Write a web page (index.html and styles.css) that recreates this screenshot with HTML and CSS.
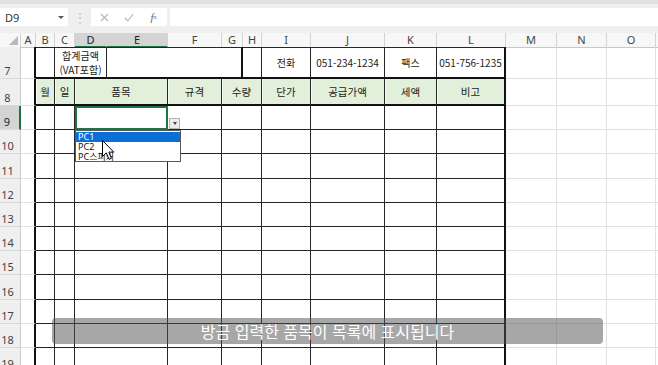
FILE: index.html
```html
<!DOCTYPE html>
<html lang="ko">
<head>
<meta charset="utf-8">
<title>Sheet</title>
<link rel="stylesheet" href="styles.css">
</head>
<body>
<div class="app">
  <div class="fbar">
    <div class="namebox"><span>D9</span><span class="caret"></span></div>
    <div class="grip">⋮</div>
    <div class="fbtns">
      <span class="ico"><svg width="9" height="9" viewBox="0 0 9 9"><path d="M1 1L8 8M8 1L1 8" stroke="#b4b4b4" stroke-width="1.1" fill="none"/></svg></span>
      <span class="ico"><svg width="10" height="9" viewBox="0 0 10 9"><path d="M1 5L3.8 8L9 1" stroke="#b4b4b4" stroke-width="1.1" fill="none"/></svg></span>
      <span class="ico fx">f<sub>x</sub></span>
    </div>
    <div class="finput"></div>
  </div>

  <div class="sheet">
    <div class="row hdr">
      <div class="corner"><span class="tri"></span></div>
      <div class="ch">A</div><div class="ch">B</div><div class="ch">C</div>
      <div class="ch on">D</div><div class="ch on">E</div>
      <div class="ch">F</div><div class="ch">G</div><div class="ch">H</div>
      <div class="ch">I</div><div class="ch">J</div><div class="ch">K</div>
      <div class="ch">L</div><div class="ch">M</div><div class="ch">N</div>
      <div class="ch">O</div><div class="ch"></div>
    </div>

    <div class="row r7">
      <div class="c rh">7</div>
      <div class="c ae"></div>
      <div class="c t top"></div>
      <div class="c t top s2 two">합계금액<br>(VAT포함)</div>
      <div class="c t top s3 thick"></div>
      <div class="c t top"></div>
      <div class="c t top">전화</div>
      <div class="c t top">051-234-1234</div>
      <div class="c t top">팩스</div>
      <div class="c t top le">051-756-1235</div>
      <div class="c"></div><div class="c"></div><div class="c"></div><div class="c"></div>
    </div>

    <div class="row r8">
      <div class="c rh">8</div>
      <div class="c ae"></div>
      <div class="c t">월</div>
      <div class="c t">일</div>
      <div class="c t s2">품목</div>
      <div class="c t">규격</div>
      <div class="c t s2">수량</div>
      <div class="c t">단가</div>
      <div class="c t">공급가액</div>
      <div class="c t">세액</div>
      <div class="c t le">비고</div>
      <div class="c"></div><div class="c"></div><div class="c"></div><div class="c"></div>
    </div>

    <div class="row rb">
      <div class="c rh on">9</div>
      <div class="c ae"></div><div class="c t"></div><div class="c t"></div>
      <div class="c t s2 sel"></div><div class="c t"></div><div class="c t s2"></div>
      <div class="c t"></div><div class="c t"></div><div class="c t"></div><div class="c t le"></div>
      <div class="c"></div><div class="c"></div><div class="c"></div><div class="c"></div>
    </div>
    <div class="row rb">
      <div class="c rh">10</div>
      <div class="c ae"></div><div class="c t"></div><div class="c t"></div>
      <div class="c t s2"></div><div class="c t"></div><div class="c t s2"></div>
      <div class="c t"></div><div class="c t"></div><div class="c t"></div><div class="c t le"></div>
      <div class="c"></div><div class="c"></div><div class="c"></div><div class="c"></div>
    </div>
    <div class="row rb">
      <div class="c rh">11</div>
      <div class="c ae"></div><div class="c t"></div><div class="c t"></div>
      <div class="c t s2"></div><div class="c t"></div><div class="c t s2"></div>
      <div class="c t"></div><div class="c t"></div><div class="c t"></div><div class="c t le"></div>
      <div class="c"></div><div class="c"></div><div class="c"></div><div class="c"></div>
    </div>
    <div class="row rb">
      <div class="c rh">12</div>
      <div class="c ae"></div><div class="c t"></div><div class="c t"></div>
      <div class="c t s2"></div><div class="c t"></div><div class="c t s2"></div>
      <div class="c t"></div><div class="c t"></div><div class="c t"></div><div class="c t le"></div>
      <div class="c"></div><div class="c"></div><div class="c"></div><div class="c"></div>
    </div>
    <div class="row rb">
      <div class="c rh">13</div>
      <div class="c ae"></div><div class="c t"></div><div class="c t"></div>
      <div class="c t s2"></div><div class="c t"></div><div class="c t s2"></div>
      <div class="c t"></div><div class="c t"></div><div class="c t"></div><div class="c t le"></div>
      <div class="c"></div><div class="c"></div><div class="c"></div><div class="c"></div>
    </div>
    <div class="row rb">
      <div class="c rh">14</div>
      <div class="c ae"></div><div class="c t"></div><div class="c t"></div>
      <div class="c t s2"></div><div class="c t"></div><div class="c t s2"></div>
      <div class="c t"></div><div class="c t"></div><div class="c t"></div><div class="c t le"></div>
      <div class="c"></div><div class="c"></div><div class="c"></div><div class="c"></div>
    </div>
    <div class="row rb">
      <div class="c rh">15</div>
      <div class="c ae"></div><div class="c t"></div><div class="c t"></div>
      <div class="c t s2"></div><div class="c t"></div><div class="c t s2"></div>
      <div class="c t"></div><div class="c t"></div><div class="c t"></div><div class="c t le"></div>
      <div class="c"></div><div class="c"></div><div class="c"></div><div class="c"></div>
    </div>
    <div class="row rb">
      <div class="c rh">16</div>
      <div class="c ae"></div><div class="c t"></div><div class="c t"></div>
      <div class="c t s2"></div><div class="c t"></div><div class="c t s2"></div>
      <div class="c t"></div><div class="c t"></div><div class="c t"></div><div class="c t le"></div>
      <div class="c"></div><div class="c"></div><div class="c"></div><div class="c"></div>
    </div>
    <div class="row rb">
      <div class="c rh">17</div>
      <div class="c ae"></div><div class="c t"></div><div class="c t"></div>
      <div class="c t s2"></div><div class="c t"></div><div class="c t s2"></div>
      <div class="c t"></div><div class="c t"></div><div class="c t"></div><div class="c t le"></div>
      <div class="c"></div><div class="c"></div><div class="c"></div><div class="c"></div>
    </div>
    <div class="row rb">
      <div class="c rh">18</div>
      <div class="c ae"></div><div class="c t"></div><div class="c t"></div>
      <div class="c t s2"></div><div class="c t"></div><div class="c t s2"></div>
      <div class="c t"></div><div class="c t"></div><div class="c t"></div><div class="c t le"></div>
      <div class="c"></div><div class="c"></div><div class="c"></div><div class="c"></div>
    </div>
    <div class="row rb">
      <div class="c rh">19</div>
      <div class="c ae"></div><div class="c t"></div><div class="c t"></div>
      <div class="c t s2"></div><div class="c t"></div><div class="c t s2"></div>
      <div class="c t"></div><div class="c t"></div><div class="c t"></div><div class="c t le"></div>
      <div class="c"></div><div class="c"></div><div class="c"></div><div class="c"></div>
    </div>
  </div>

  <div class="ddbtn"><span class="ddcaret"></span></div>
  <ul class="ddlist">
    <li class="hi">PC1</li>
    <li>PC2</li>
    <li>PC스피커</li>
  </ul>
  <svg class="cursor" width="13" height="21" viewBox="0 0 13 21"><path d="M0.5 0.5L0.5 16.5L4.3 12.9L7 19.3L9.4 18.3L6.8 12.1L11.8 12.1Z" fill="#fff" stroke="#000" stroke-width="1" stroke-linejoin="round"/></svg>
  <div class="caption">방금 입력한 품목이 목록에 표시됩니다</div>
</div>
</body>
</html>
```

FILE: styles.css
```css
html, body {
  margin: 0;
  padding: 0;
}
body {
  width: 658px;
  height: 365px;
  overflow: hidden;
  background: #fff;
  font-family: "Noto Sans CJK KR", "Noto Sans", sans-serif;
  color: #222;
}
.app {
  position: relative;
  width: 658px;
  height: 365px;
  overflow: hidden;
}

/* formula bar */
.fbar {
  height: 33px;
  box-sizing: border-box;
  background: #efefef;
  border-top: 4px solid #e2e2e2;
  padding-top: 4px;
  display: flex;
  align-items: flex-start;
}
.namebox {
  width: 68px;
  height: 18px;
  box-sizing: border-box;
  background: #fff;
  display: flex;
  align-items: center;
  justify-content: space-between;
  padding: 0 4px 0 5px;
  font-family: "Noto Sans", sans-serif;
  font-size: 11px;
  color: #333;
}
.caret {
  width: 0;
  height: 0;
  border-left: 3px solid transparent;
  border-right: 3px solid transparent;
  border-top: 3px solid #555;
}
.grip {
  width: 23px;
  height: 18px;
  text-align: center;
  color: #c4c4c4;
  font-size: 12px;
  line-height: 18px;
}
.fbtns {
  width: 76px;
  height: 18px;
  background: #fff;
  display: grid;
  grid-template-columns: 26px 23px 27px;
  align-items: center;
}
.ico {
  display: flex;
  justify-content: center;
  align-items: center;
}
.fx {
  font-family: "Liberation Serif", serif;
  font-style: italic;
  font-size: 11px;
  color: #666;
  line-height: 1;
}
.fx sub {
  font-size: 7px;
  vertical-align: -1px;
}
.finput {
  flex: 1;
  height: 18px;
  margin-left: 3px;
  background: #fff;
}

/* sheet */
.sheet {
  --cols: 21px 15px 19px 20px 32px 61px 54px 21px 19px 49px 74px 52px 69px 51px 50px 49px 10px;
}
.row {
  display: grid;
  grid-template-columns: var(--cols);
  width: 666px;
}
.hdr { height: 14px; }
.r7 { height: 32px; }
.r8 { height: 27px; }
.rb { height: 24.2px; }

.corner {
  background: #f7f7f7;
  border-right: 1px solid #d2d2d2;
  border-bottom: 1px solid #c8c8c8;
  box-sizing: border-box;
  display: flex;
  justify-content: flex-end;
  align-items: flex-end;
  padding: 0 2px 2px 0;
}
.tri {
  width: 0;
  height: 0;
  border-left: 9px solid transparent;
  border-bottom: 9px solid #b9b9b9;
}
.ch {
  box-sizing: border-box;
  background: #f7f7f7;
  border-right: 1px solid #d4d4d4;
  border-bottom: 1px solid #c8c8c8;
  font-family: "Noto Sans", sans-serif;
  font-size: 11px;
  line-height: 13px;
  color: #444;
  text-align: center;
}
.ch.on {
  background: #d4d4d4;
  border-bottom: 2px solid #217346;
  color: #222;
}

.c {
  box-sizing: border-box;
  border-right: 1px solid #e0e0e0;
  border-bottom: 1px solid #e0e0e0;
  display: flex;
  align-items: center;
  justify-content: center;
  font-size: 10px;
  line-height: 12px;
  white-space: nowrap;
  min-width: 0;
}
.rh {
  background: #efefef;
  border-right: 1px solid #cbcbcb;
  border-bottom: 1px solid #dadada;
  font-family: "Noto Sans", sans-serif;
  font-size: 11px;
  color: #444;
  align-items: flex-end;
  padding: 0 5px 1px 0;
}
.rh.on {
  background: #d4d4d4;
  border-right: 2px solid #217346;
  color: #222;
}
.t {
  border-right-color: #262626;
  border-bottom-color: #262626;
}
.top { border-top: 1px solid #262626; }
.ae { border-right: 2px solid #111; }
.le { border-right: 2px solid #111; }
.thick { border-right: 2px solid #111; }
.s2 { grid-column: span 2; }
.s3 { grid-column: span 3; }
.two { text-align: center; line-height: 14px; padding-top: 1px; }

.r7 .t { border-bottom: 2px solid #111; }
.r8 .t {
  border-bottom: 2px solid #111;
  background: #e2efda;
  box-shadow: inset 1px 0 0 #f6faf3;
  font-size: 10.5px;
}
.sel {
  outline: 2px solid #217346;
  outline-offset: -2px;
}

/* overlays */
.ddbtn {
  position: absolute;
  left: 169px;
  top: 118px;
  width: 11px;
  height: 11px;
  box-sizing: border-box;
  background: #ececec;
  border: 1px solid #b4b4b4;
  display: flex;
  align-items: center;
  justify-content: center;
}
.ddcaret {
  width: 0;
  height: 0;
  border-left: 2.5px solid transparent;
  border-right: 2.5px solid transparent;
  border-top: 3px solid #444;
}
.ddlist {
  position: absolute;
  left: 75px;
  top: 130px;
  width: 106px;
  margin: 0;
  padding: 1px 0 0;
  list-style: none;
  box-sizing: border-box;
  height: 32px;
  background: #fff;
  border: 1px solid #5a5a5a;
  font-family: "Noto Sans", "Noto Sans CJK KR", sans-serif;
  font-size: 9px;
}
.ddlist li {
  height: 10px;
  line-height: 10px;
  padding-left: 2px;
  color: #111;
  font-family: "Noto Sans", "Noto Sans CJK KR", sans-serif;
}
.ddlist li.hi {
  background: #0a6fd6;
  color: #fff;
}
.cursor {
  position: absolute;
  left: 102px;
  top: 140px;
}
.caption {
  position: absolute;
  left: 52px;
  top: 318px;
  width: 551px;
  height: 26px;
  border-radius: 4px;
  background: rgba(80, 80, 80, 0.5);
  color: #fff;
  font-size: 16px;
  display: flex;
  align-items: center;
  justify-content: center;
}
```
